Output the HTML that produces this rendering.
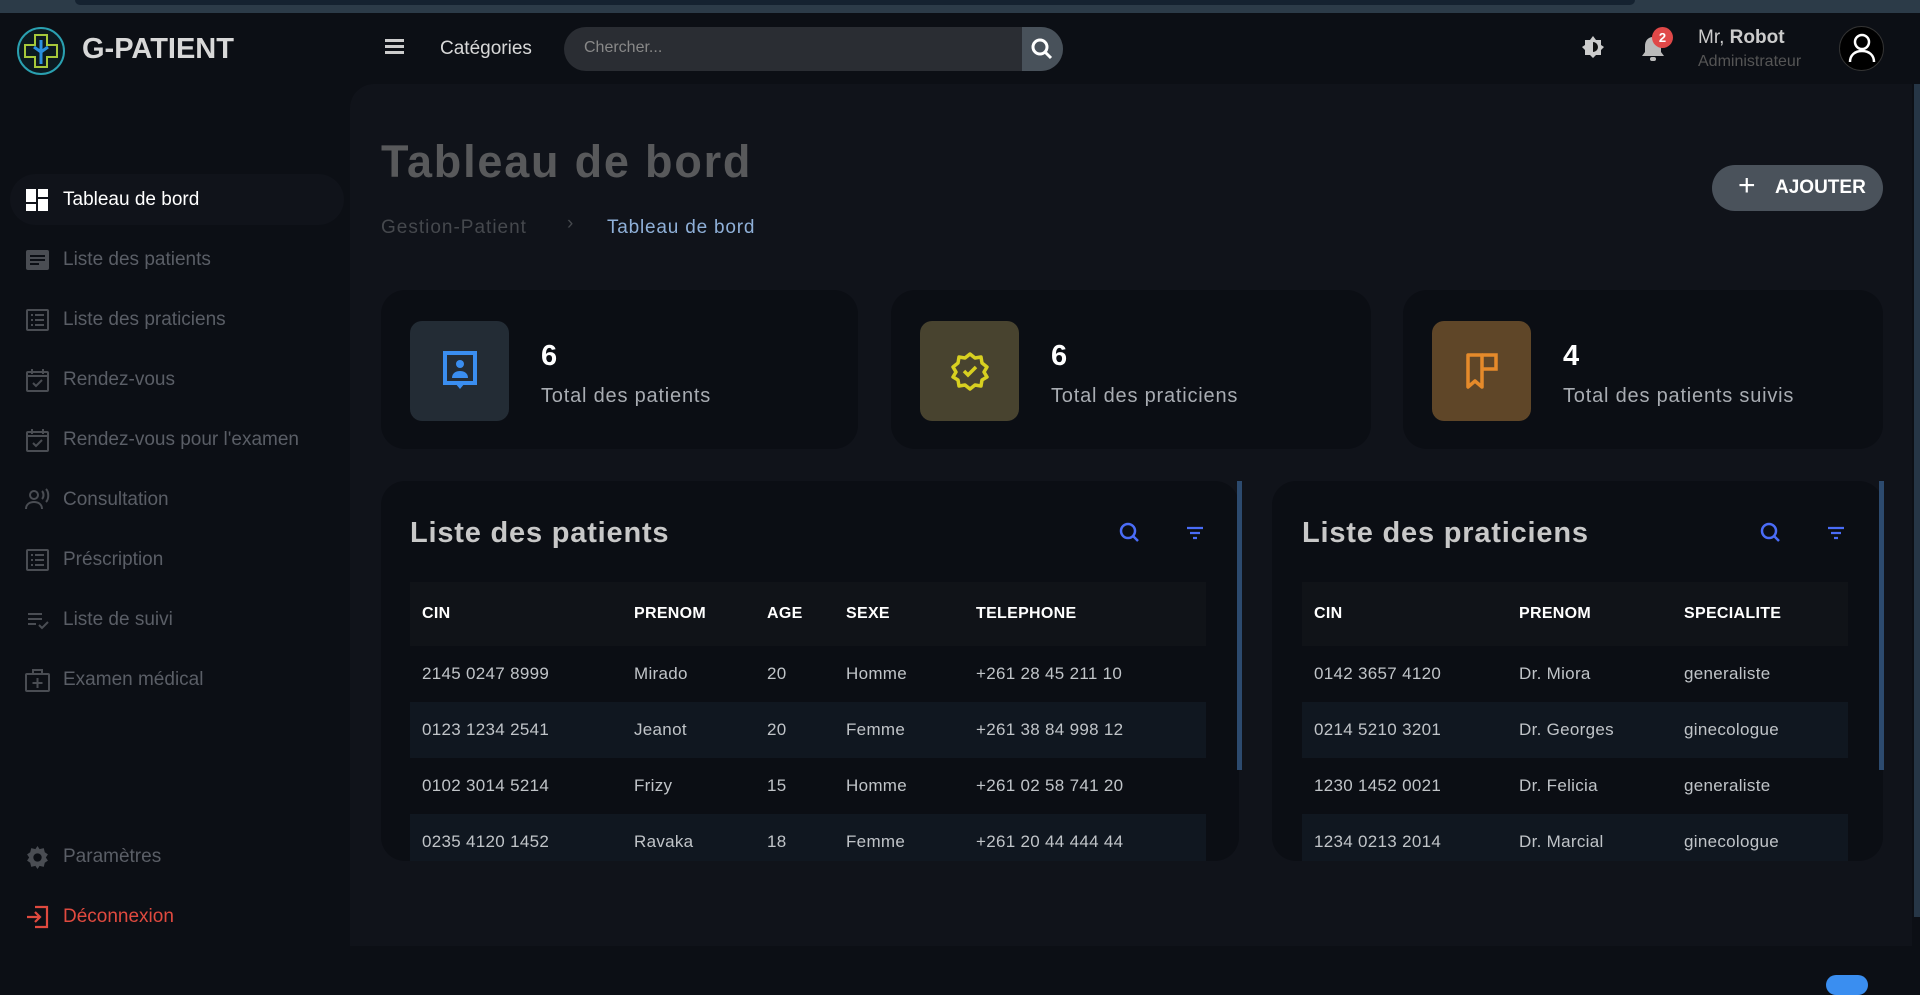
<!DOCTYPE html>
<html><head><meta charset="utf-8"><style>
*{margin:0;padding:0;box-sizing:border-box}
body{width:1920px;height:983px;background:#0c0f15;font-family:"Liberation Sans",sans-serif;position:relative;overflow:hidden;color:#c0c4c8}
.a{position:absolute}
.top{left:0;top:0;width:1920px;height:13px;background:#2c3b48}
.top2{left:75px;top:0;width:1560px;height:5px;background:#152230;border-radius:0 0 8px 8px}
.main{left:350px;top:84px;width:1562px;height:862px;background:#10131a;border-radius:24px 0 0 0}
.nav{left:0;height:60px;width:344px;font-size:19px;color:#5a5e66;display:flex;align-items:center}
.nav svg{position:absolute;left:25px}
.nav span{position:absolute;left:63px}
.card{background:#0b0e14;border-radius:24px}
.ib{width:99px;height:100px;border-radius:12px;display:flex;align-items:center;justify-content:center}
.num{font-size:29px;font-weight:bold;color:#fff}
.lbl{font-size:20px;color:#a8acb2;letter-spacing:0.8px}
table{border-collapse:collapse;font-size:17px;color:#c0c4c8;letter-spacing:0.3px}
th{height:64px;text-align:left;font-size:16px;color:#fff;font-weight:bold;background:#101318;padding-left:12px}
td{height:56px;padding-left:12px;background:#0b0e14}
tr:nth-child(odd) td{background:#101720}
.ct{font-size:29px;font-weight:bold;color:#c8c8c8;letter-spacing:0.8px}
</style></head><body>
<div class="a top"></div><div class="a top2"></div>
<div class="a main"></div>
<svg class="a" style="left:16px;top:26px" width="50" height="50" viewBox="0 0 50 50"><circle cx="25" cy="25" r="23" fill="#0c1a20" stroke="#2aa0b0" stroke-width="2"/><path d="M19 9h12v10h10v12H31v10H19V31H9V19h10z" fill="none" stroke="#a6c83a" stroke-width="2"/><path d="M25 14v24M18 21l7 5 7-5" stroke="#2a90e0" stroke-width="3" fill="none"/></svg>
<div class="a" style="left:82px;top:33px;font-size:29px;font-weight:bold;color:#d8d8d8">G-PATIENT</div>
<div class="a" style="left:385px;top:39px;width:19px;height:3px;background:#ccc;box-shadow:0 6px 0 #ccc,0 12px 0 #ccc"></div>
<div class="a" style="left:440px;top:38px;font-size:19px;color:#d8d8d8">Catégories</div>
<div class="a" style="left:564px;top:27px;width:499px;height:44px;background:#2a2d33;border-radius:22px;overflow:hidden"><span class="a" style="left:20px;top:12px;font-size:16px;color:#888">Chercher...</span><div class="a" style="left:458px;top:0;width:41px;height:44px;background:#48515a"></div>
<svg class="a" style="left:466px;top:10px" width="24" height="24" viewBox="0 0 24 24"><circle cx="10" cy="10" r="7" fill="none" stroke="#fff" stroke-width="3"/><path d="M15 15l6 6" stroke="#fff" stroke-width="3"/></svg></div>
<svg class="a" style="left:1581px;top:35px" width="24" height="24" viewBox="0 0 24 24"><path d="M12 1l3 4 5 0 0 5 3 2-3 3 0 5-5 0-3 3-3-3-5 0 0-5-3-3 3-2 0-5 5 0z" fill="#ccc"/><path d="M12 7a5 5 0 0 1 0 10z" fill="#111"/></svg>
<svg class="a" style="left:1640px;top:35px" width="26" height="28" viewBox="0 0 26 28"><path d="M13 2c-5 0-8 4-8 9v6l-3 4h22l-3-4v-6c0-5-3-9-8-9z" fill="#bbb"/><rect x="10" y="22" width="6" height="4" rx="2" fill="#bbb"/></svg>
<div class="a" style="left:1652px;top:27px;width:21px;height:21px;border-radius:50%;background:#e04848;color:#fff;font-size:13px;font-weight:bold;text-align:center;line-height:21px">2</div>
<div class="a" style="left:1698px;top:27px;font-size:19px;color:#ccc">Mr, <b>Robot</b></div>
<div class="a" style="left:1698px;top:53px;font-size:16px;color:#555">Administrateur</div>
<div class="a" style="left:1839px;top:26px;width:45px;height:45px;border-radius:50%;background:#000;border:1px solid #333"></div>
<svg class="a" style="left:1847px;top:32px" width="30" height="32" viewBox="0 0 30 32"><circle cx="15" cy="10" r="7" fill="none" stroke="#fff" stroke-width="2.5"/><path d="M3 30c0-7 5-11 12-11s12 4 12 11" fill="none" stroke="#fff" stroke-width="2.5"/></svg>
<div class="a" style="left:10px;top:174px;width:334px;height:51px;background:#10131a;border-radius:26px"></div>
<div class="a nav" style="top:170px;color:#fff"><svg width="24" height="24" viewBox="0 0 24 24"><rect x="1" y="1" width="10" height="13" fill="#fff"/><rect x="13" y="1" width="10" height="8" fill="#fff"/><rect x="1" y="16" width="10" height="7" fill="#fff"/><rect x="13" y="11" width="10" height="12" fill="#fff"/></svg><span>Tableau de bord</span></div>
<div class="a nav" style="top:230px"><svg width="25" height="24" viewBox="0 0 25 24"><rect x="1" y="2" width="23" height="20" rx="2" fill="#4a4d53"/><path d="M5 8h15M5 12h15M5 16h9" stroke="#0c0f15" stroke-width="2"/></svg><span>Liste des patients</span></div>
<div class="a nav" style="top:290px"><svg width="25" height="24" viewBox="0 0 25 24"><rect x="2" y="2" width="21" height="20" rx="1" fill="none" stroke="#4a4d53" stroke-width="2"/><path d="M6 7h2M10 7h9M6 12h2M10 12h9M6 17h2M10 17h9" stroke="#4a4d53" stroke-width="2"/></svg><span>Liste des praticiens</span></div>
<div class="a nav" style="top:350px"><svg width="25" height="24" viewBox="0 0 25 24"><rect x="2" y="4" width="21" height="19" rx="1" fill="none" stroke="#4a4d53" stroke-width="2"/><path d="M2 8h21M7 1v5M18 1v5M8 15l3 3 6-6" stroke="#4a4d53" stroke-width="2" fill="none"/></svg><span>Rendez-vous</span></div>
<div class="a nav" style="top:410px"><svg width="25" height="24" viewBox="0 0 25 24"><rect x="2" y="4" width="21" height="19" rx="1" fill="none" stroke="#4a4d53" stroke-width="2"/><path d="M2 8h21M7 1v5M18 1v5M8 15l3 3 6-6" stroke="#4a4d53" stroke-width="2" fill="none"/></svg><span>Rendez-vous pour l'examen</span></div>
<div class="a nav" style="top:470px"><svg width="25" height="24" viewBox="0 0 25 24"><circle cx="9" cy="7" r="4" fill="none" stroke="#4a4d53" stroke-width="2"/><path d="M1 21c0-5 4-7 8-7s8 2 8 7M17 3c2 2 2 6 0 8M21 1c3 3 3 10 0 13" stroke="#4a4d53" stroke-width="2" fill="none"/></svg><span>Consultation</span></div>
<div class="a nav" style="top:530px"><svg width="25" height="24" viewBox="0 0 25 24"><rect x="2" y="2" width="21" height="20" rx="1" fill="none" stroke="#4a4d53" stroke-width="2"/><path d="M6 7h2M10 7h9M6 12h2M10 12h9M6 17h2M10 17h9" stroke="#4a4d53" stroke-width="2"/></svg><span>Préscription</span></div>
<div class="a nav" style="top:590px"><svg width="25" height="24" viewBox="0 0 25 24"><path d="M3 6h14M3 11h14M3 16h8M14 17l3 3 6-6" stroke="#4a4d53" stroke-width="2" fill="none"/></svg><span>Liste de suivi</span></div>
<div class="a nav" style="top:650px"><svg width="25" height="24" viewBox="0 0 25 24"><rect x="1" y="6" width="23" height="17" rx="1" fill="none" stroke="#4a4d53" stroke-width="2"/><path d="M8 6V2h9v4M12.5 10v10M7.5 15h10" stroke="#4a4d53" stroke-width="2" fill="none"/></svg><span>Examen médical</span></div>
<div class="a nav" style="top:827px"><svg width="25" height="25" viewBox="0 0 24 24"><path d="M12 1l2 3 4-1 1 4 3 2-2 3 2 3-3 2-1 4-4-1-2 3-2-3-4 1-1-4-3-2 2-3-2-3 3-2 1-4 4 1z" fill="#4a4d53"/><circle cx="12" cy="12" r="4" fill="#0c0f15"/></svg><span>Paramètres</span></div>
<div class="a nav" style="top:887px;color:#e04a3f"><svg width="25" height="24" viewBox="0 0 25 24"><path d="M10 2h12v20H10M2 12h13M10 7l5 5-5 5" stroke="#e04a3f" stroke-width="2.2" fill="none"/></svg><span>Déconnexion</span></div>
<div class="a" style="left:381px;top:136px;font-size:45px;font-weight:bold;color:#58595b;letter-spacing:1.8px">Tableau de bord</div>
<div class="a" style="left:381px;top:217px;font-size:19px;color:#45484d;letter-spacing:1px">Gestion-Patient</div>
<div class="a" style="left:567px;top:213px;font-size:19px;color:#45484d">›</div>
<div class="a" style="left:607px;top:217px;font-size:19px;color:#8fb0d8;letter-spacing:0.8px">Tableau de bord</div>
<div class="a" style="left:1712px;top:165px;width:171px;height:46px;border-radius:23px;background:#4a525b;color:#fff;font-size:19px;font-weight:bold;line-height:46px"><span class="a" style="left:26px;top:-2px;font-size:30px;font-weight:normal">+</span><span class="a" style="left:63px">AJOUTER</span></div>
<div class="a card" style="left:381px;top:290px;width:477px;height:159px"><div class="a ib" style="left:29px;top:31px;background:#232c35"><svg width="36" height="42" viewBox="0 0 36 42"><rect x="3" y="3" width="30" height="30" fill="none" stroke="#3a8ef0" stroke-width="4"/><path d="M13 33l5 6 5-6" fill="#3a8ef0"/><circle cx="18" cy="14" r="4" fill="#3a8ef0"/><path d="M10 28c0-5 4-7 8-7s8 2 8 7z" fill="#3a8ef0"/></svg></div><div class="a num" style="left:160px;top:50px">6</div><div class="a lbl" style="left:160px;top:95px">Total des patients</div></div>
<div class="a card" style="left:891px;top:290px;width:480px;height:159px"><div class="a ib" style="left:29px;top:31px;background:#48432f"><svg width="40" height="40" viewBox="0 0 40 40"><path d="M20 3l5 4 6-1 1 6 5 4-3 5 3 5-5 3-1 6-6-1-5 4-5-4-6 1-1-6-5-3 3-5-3-5 5-4 1-6 6 1z" fill="none" stroke="#d8d020" stroke-width="3.5" stroke-linejoin="round"/><path d="M14 20l4 4 8-8" stroke="#d8d020" stroke-width="3.5" fill="none"/></svg></div><div class="a num" style="left:160px;top:50px">6</div><div class="a lbl" style="left:160px;top:95px">Total des praticiens</div></div>
<div class="a card" style="left:1403px;top:290px;width:480px;height:159px"><div class="a ib" style="left:29px;top:31px;background:#5f4628"><svg width="36" height="40" viewBox="0 0 36 40"><path d="M4 4h14v32l-7-6-7 6z" fill="none" stroke="#e58a2a" stroke-width="3.5" stroke-linejoin="round"/><path d="M18 4h14v14H18" fill="none" stroke="#e58a2a" stroke-width="3.5"/></svg></div><div class="a num" style="left:160px;top:50px">4</div><div class="a lbl" style="left:160px;top:95px">Total des patients suivis</div></div>
<div class="a card" style="left:381px;top:481px;width:858px;height:380px;overflow:hidden">
<div class="a ct" style="left:29px;top:36px">Liste des patients</div>
<svg class="a" style="left:737px;top:40px" width="24" height="24" viewBox="0 0 24 24"><circle cx="10" cy="10" r="7" fill="none" stroke="#4a6cf7" stroke-width="2.5"/><path d="M15 15l5 5" stroke="#4a6cf7" stroke-width="2.5"/></svg>
<svg class="a" style="left:804px;top:44px" width="20" height="16" viewBox="0 0 20 16"><path d="M2 3h16M5 8h10M8 13h4" stroke="#4a6cf7" stroke-width="2.2"/></svg>
<table class="a" style="left:29px;top:101px;width:796px">
<tr><th style="width:212px">CIN</th><th style="width:133px">PRENOM</th><th style="width:79px">AGE</th><th style="width:130px">SEXE</th><th>TELEPHONE</th></tr>
<tr><td>2145 0247 8999</td><td>Mirado</td><td>20</td><td>Homme</td><td>+261 28 45 211 10</td></tr>
<tr><td>0123 1234 2541</td><td>Jeanot</td><td>20</td><td>Femme</td><td>+261 38 84 998 12</td></tr>
<tr><td>0102 3014 5214</td><td>Frizy</td><td>15</td><td>Homme</td><td>+261 02 58 741 20</td></tr>
<tr><td>0235 4120 1452</td><td>Ravaka</td><td>18</td><td>Femme</td><td>+261 20 44 444 44</td></tr>
</table></div>
<div class="a" style="left:1237px;top:481px;width:5px;height:289px;background:#2c4a6e"></div>
<div class="a card" style="left:1272px;top:481px;width:611px;height:380px;overflow:hidden">
<div class="a ct" style="left:30px;top:36px">Liste des praticiens</div>
<svg class="a" style="left:487px;top:40px" width="24" height="24" viewBox="0 0 24 24"><circle cx="10" cy="10" r="7" fill="none" stroke="#4a6cf7" stroke-width="2.5"/><path d="M15 15l5 5" stroke="#4a6cf7" stroke-width="2.5"/></svg>
<svg class="a" style="left:554px;top:44px" width="20" height="16" viewBox="0 0 20 16"><path d="M2 3h16M5 8h10M8 13h4" stroke="#4a6cf7" stroke-width="2.2"/></svg>
<table class="a" style="left:30px;top:101px;width:546px">
<tr><th style="width:205px">CIN</th><th style="width:165px">PRENOM</th><th>SPECIALITE</th></tr>
<tr><td>0142 3657 4120</td><td>Dr. Miora</td><td>generaliste</td></tr>
<tr><td>0214 5210 3201</td><td>Dr. Georges</td><td>ginecologue</td></tr>
<tr><td>1230 1452 0021</td><td>Dr. Felicia</td><td>generaliste</td></tr>
<tr><td>1234 0213 2014</td><td>Dr. Marcial</td><td>ginecologue</td></tr>
</table></div>
<div class="a" style="left:1879px;top:481px;width:5px;height:289px;background:#2c4a6e"></div>
<div class="a" style="left:1914px;top:84px;width:6px;height:833px;background:#263646"></div>
<div class="a" style="left:1826px;top:975px;width:42px;height:20px;border-radius:10px;background:#3a8ef0"></div>
</body></html>
